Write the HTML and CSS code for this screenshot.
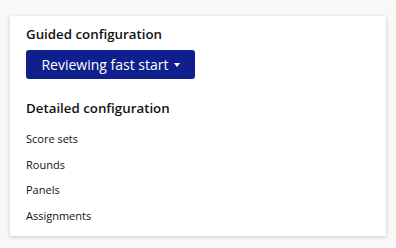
FILE: index.html
```
<!DOCTYPE html>
<html lang="en">
<head>
    <meta charset="UTF-8">
    <title>Configuration</title>
<link rel="stylesheet" href="styles.css">
</head>
<body>
    <div class="card">
        <h3>Guided configuration</h3>
        <button class="guided">Reviewing fast start <span class="caret"></span></button>
        <h3 class="detailed">Detailed configuration</h3>
        <ul class="links">
            <li>Score sets</li>
            <li>Rounds</li>
            <li>Panels</li>
            <li>Assignments</li>
        </ul>
    </div>
</body>
</html>
```
FILE: styles.css
```
* {
    padding: 0;
    margin: 0;
    box-sizing: border-box;
}

body {
    background-color: #f8f8f8;
    font-family: "Open Sans", sans-serif;
    color: #111;
    padding: 16px 10px 12px 10px;
}

.card {
    background-color: white;
    width: 376px;
    height: 220px;
    box-shadow: 0 1px 4px rgba(0, 0, 0, 0.2);
    padding: 8px 16px;
}

h3 {
    font-size: 13.3px;
    font-weight: 600;
    line-height: 20px;
}

.guided {
    margin-top: 6px;
    width: 169px;
    height: 29px;
    border: none;
    border-radius: 3px;
    background-color: #0f1f8c;
    color: white;
    font-family: "Open Sans", sans-serif;
    font-size: 14px;
    display: flex;
    align-items: center;
    justify-content: center;
    gap: 5px;
    cursor: pointer;
}

.caret {
    width: 0;
    height: 0;
    border-left: 3.5px solid transparent;
    border-right: 3.5px solid transparent;
    border-top: 4px solid white;
}

.detailed {
    margin-top: 19px;
}

.links {
    list-style: none;
    margin-top: 8px;
}

.links li {
    font-size: 11px;
    line-height: 25.5px;
}
```
